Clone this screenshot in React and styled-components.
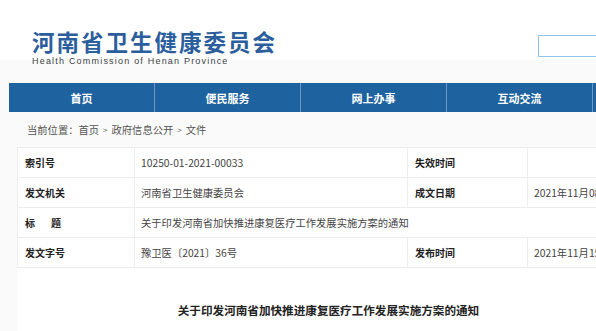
import React from "react";
import styled, { createGlobalStyle } from "styled-components";

const GlobalStyle = createGlobalStyle`
  html, body {
    margin: 0;
    padding: 0;
    background: #fafafa;
    overflow: hidden;
  }
  body {
    font-family: "Noto Sans CJK SC", "Noto Sans", sans-serif;
    color: #333;
  }
`;

const Page = styled.div`
  width: 640px;
`;

const Header = styled.header`
  height: 60px;
  background: #fff;
  display: flex;
  align-items: flex-start;
  padding-left: 32px;
`;

const Logo = styled.div`
  padding-top: 28px;
  display: flex;
  flex-direction: column;
`;

const LogoTitle = styled.div`
  font-size: 22.5px;
  line-height: 27px;
  font-weight: 700;
  letter-spacing: 2px;
  color: #2b5e9d;
`;

const LogoSub = styled.div`
  margin-top: 1px;
  font-family: "Liberation Sans", Arial, sans-serif;
  font-size: 9px;
  line-height: 10px;
  letter-spacing: 1.2px;
  color: #3a3f48;
`;

const SearchBox = styled.div`
  margin-left: auto;
  margin-top: 35px;
  width: 100px;
  height: 20px;
  border: 1.5px solid #8fc6ea;
  background: #fff;
`;

const Nav = styled.nav`
  margin: 23px 0 0 9px;
  display: grid;
  grid-template-columns: repeat(5, 146px);
  height: 29px;
  background: #1e62a0;
`;

const NavItem = styled.div`
  display: flex;
  align-items: center;
  justify-content: center;
  color: #fff;
  font-size: 11px;
  font-weight: 700;
  border-right: 1px solid rgba(255, 255, 255, 0.35);
`;

const Crumbs = styled.div`
  height: 35px;
  display: flex;
  align-items: center;
  padding-left: 27px;
  font-size: 10.3px;
  color: #555;
`;

const Sep = styled.span`
  margin: 0 4px;
  font-size: 8px;
`;

const InfoTable = styled.table`
  margin-left: 17px;
  width: 623px;
  border-collapse: collapse;
  background: #fff;
  table-layout: fixed;
`;

const Cell = styled.td`
  height: 29px;
  padding: 0 0 0 ${(p) => (p.$label ? 7 : 6)}px;
  border: 1px solid #ededed;
  font-size: ${(p) => (p.$label ? "10px" : "10.3px")};
  font-weight: ${(p) => (p.$label ? 700 : 400)};
  color: ${(p) => (p.$label ? "#222" : "#444")};
  white-space: nowrap;
  overflow: hidden;
`;

const Spaced = styled.span`
  letter-spacing: ${(p) => p.$gap}px;
`;

const Body = styled.div`
  margin-left: 17px;
  width: 623px;
  height: 70px;
  background: #fff;
  display: flex;
  justify-content: center;
  padding-top: 34px;
`;

const DocTitle = styled.h1`
  margin: 0;
  font-size: 11.6px;
  line-height: 16px;
  font-weight: 700;
  color: #222;
`;

const navItems = ["首页", "便民服务", "网上办事", "互动交流", ""];

export default function App() {
  return (
    <Page>
      <GlobalStyle />
      <Header>
        <Logo>
          <LogoTitle>河南省卫生健康委员会</LogoTitle>
          <LogoSub>Health Commission of Henan Province</LogoSub>
        </Logo>
        <SearchBox />
      </Header>
      <Nav>
        {navItems.map((n, i) => (
          <NavItem key={i}>{n}</NavItem>
        ))}
      </Nav>
      <Crumbs>
        当前位置：首页<Sep>&gt;</Sep>政府信息公开<Sep>&gt;</Sep>文件
      </Crumbs>
      <InfoTable>
        <colgroup>
          <col style={{ width: 117 }} />
          <col style={{ width: 273 }} />
          <col style={{ width: 120 }} />
          <col />
        </colgroup>
        <tbody>
          <tr>
            <Cell $label><Spaced $gap={0}>索引号</Spaced></Cell>
            <Cell>10250-01-2021-00033</Cell>
            <Cell $label>失效时间</Cell>
            <Cell></Cell>
          </tr>
          <tr>
            <Cell $label>发文机关</Cell>
            <Cell>河南省卫生健康委员会</Cell>
            <Cell $label>成文日期</Cell>
            <Cell>2021年11月08日</Cell>
          </tr>
          <tr>
            <Cell $label><Spaced $gap={16}>标题</Spaced></Cell>
            <Cell colSpan={3}>关于印发河南省加快推进康复医疗工作发展实施方案的通知</Cell>
          </tr>
          <tr>
            <Cell $label>发文字号</Cell>
            <Cell>豫卫医〔2021〕36号</Cell>
            <Cell $label>发布时间</Cell>
            <Cell>2021年11月15日</Cell>
          </tr>
        </tbody>
      </InfoTable>
      <Body>
        <DocTitle>关于印发河南省加快推进康复医疗工作发展实施方案的通知</DocTitle>
      </Body>
    </Page>
  );
}
